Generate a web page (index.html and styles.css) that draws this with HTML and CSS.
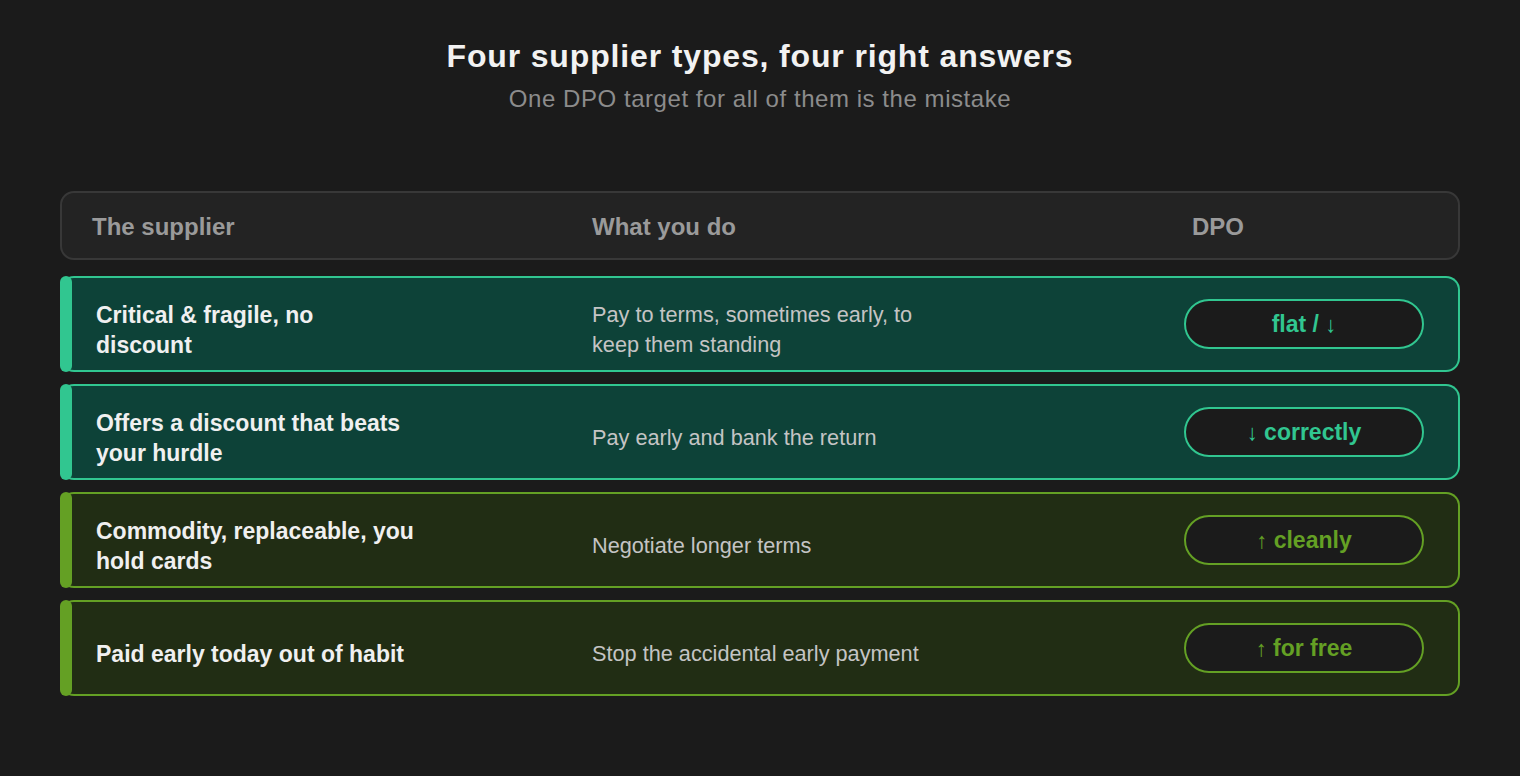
FILE: index.html
```html
<!DOCTYPE html>
<html lang="en">
<head>
<meta charset="utf-8">
<title>Four supplier types</title>
<link rel="stylesheet" href="styles.css">
</head>
<body>
<main class="page">
  <header class="intro">
    <h1 class="title">Four supplier types, four right answers</h1>
    <p class="subtitle">One DPO target for all of them is the mistake</p>
  </header>

  <section class="table">
    <div class="head">
      <div class="h-supplier">The supplier</div>
      <div class="h-action">What you do</div>
      <div class="h-dpo">DPO</div>
    </div>

    <div class="row teal">
      <div class="bar"></div>
      <div class="supplier">Critical &amp; fragile, no discount</div>
      <div class="action">Pay to terms, sometimes early, to keep them standing</div>
      <div class="dpo"><span class="pill">flat / <span class="arrow">↓</span></span></div>
    </div>

    <div class="row teal">
      <div class="bar"></div>
      <div class="supplier">Offers a discount that beats your hurdle</div>
      <div class="action">Pay early and bank the return</div>
      <div class="dpo"><span class="pill"><span class="arrow">↓</span> correctly</span></div>
    </div>

    <div class="row olive">
      <div class="bar"></div>
      <div class="supplier">Commodity, replaceable, you hold cards</div>
      <div class="action">Negotiate longer terms</div>
      <div class="dpo"><span class="pill"><span class="arrow">↑</span> cleanly</span></div>
    </div>

    <div class="row olive">
      <div class="bar"></div>
      <div class="supplier">Paid early today out of habit</div>
      <div class="action">Stop the accidental early payment</div>
      <div class="dpo"><span class="pill"><span class="arrow">↑</span> for free</span></div>
    </div>
  </section>
</main>
</body>
</html>
```

FILE: styles.css
```css
* { box-sizing: border-box; }

html, body {
  margin: 0;
  padding: 0;
  background: #1b1b1b;
  font-family: "Liberation Sans", Arial, sans-serif;
}

.page {
  width: 1520px;
  height: 776px;
  padding: 36px 60px 0 60px;
}

.intro {
  text-align: center;
}

.title {
  margin: 0;
  font-size: 32px;
  letter-spacing: 0.85px;
  line-height: 40px;
  font-weight: 700;
  color: #f2f2f2;
}

.subtitle {
  margin: 8px 0 0 0;
  font-size: 24px;
  letter-spacing: 0.55px;
  line-height: 30px;
  color: #8c8c8c;
}

.table {
  margin-top: 77px;
  display: flex;
  flex-direction: column;
  gap: 12px;
}

.head {
  display: grid;
  grid-template-columns: 500px 600px 1fr;
  align-items: center;
  height: 69px;
  padding: 3px 0 0 30px;
  margin-bottom: 4px;
  background: #232323;
  border: 2px solid #383838;
  border-radius: 14px;
  font-size: 24px;
  font-weight: 700;
  color: #9a9a9a;
}

.row {
  display: grid;
  grid-template-columns: 12px 520px 592px 1fr;
  align-items: center;
  height: 96px;
  border: 2px solid;
  border-left: 0;
  border-radius: 14px;
}

.row .bar {
  align-self: stretch;
  margin: -2px 0;
  border-radius: 8px;
}

.teal {
  background: #0d4238;
  border-color: #31c690;
}
.teal .bar { background: #31c690; }
.teal .pill { border-color: #31c690; color: #31c690; }

.olive {
  background: #212d14;
  border-color: #64a024;
}
.olive .bar { background: #64a024; }
.olive .pill { border-color: #64a024; color: #64a024; }

.supplier {
  padding-left: 24px;
  max-width: 342px;
  font-size: 23px;
  line-height: 30px;
  font-weight: 700;
  color: #f0f0f0;
  padding-top: 12px;
}

.action {
  max-width: 340px;
  font-size: 21.7px;
  line-height: 30px;
  color: #c4c4c4;
  padding-top: 12px;
}

.dpo {
  display: flex;
}

.pill {
  display: block;
  width: 240px;
  height: 50px;
  background: #1b1b1b;
  border: 2px solid;
  border-radius: 25px;
  text-align: center;
  font-size: 23px;
  line-height: 46px;
  font-weight: 700;
}

.arrow {
  font-weight: 400;
  font-size: 22px;
}
```
